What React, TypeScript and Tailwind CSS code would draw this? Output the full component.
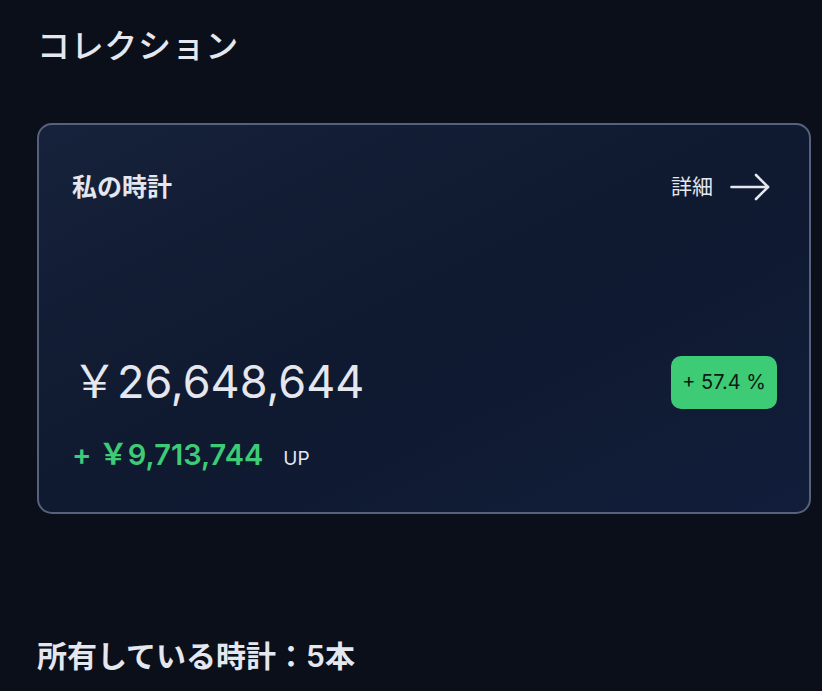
const font = { fontFamily: '"Inter", "Noto Sans CJK JP", sans-serif' };

function LongArrow() {
    return (
        <svg width="40" height="28" viewBox="0 0 40 28" fill="none" stroke="currentColor" strokeWidth="2.6" strokeLinecap="round" strokeLinejoin="round">
            <path d="M1.5 14H38" />
            <path d="M26 2L38 14L26 26" />
        </svg>
    );
}

export default function App() {
    return (
        <div className="min-h-screen bg-[#0b0f19] text-[#e5e7ef]" style={font}>
            <div className="pl-[37px] pr-[11px] pt-[22px]">
                <h1 className="text-[33px] leading-[48px] font-medium tracking-[0.02em]">コレクション</h1>

                {/* Collection card */}
                <div className="mt-[53px] rounded-[15px] border-2 border-[#56627d] bg-gradient-to-br from-[#16223b] via-[#0f192f] to-[#111d3a] pl-[33px] pr-[32px] pt-[44px] pb-[38px]">
                    <div className="flex items-center justify-between">
                        <h2 className="text-[25px] font-bold leading-[36px]">私の時計</h2>
                        <button className="flex items-center gap-[17px] pr-[7px] text-[#e5e7ef]">
                            <span className="text-[21px]">詳細</span>
                            <LongArrow />
                        </button>
                    </div>

                    <div className="mt-[147px] flex items-center justify-between">
                        <div className="text-[45px] leading-[60px]">
                            ￥26,648,644
                        </div>
                        <div className="rounded-[10px] bg-[#3dcb76] px-[11px] py-[12px] text-[20px] leading-[29px] text-[#0d1a14]">
                            + 57.4 %
                        </div>
                    </div>

                    <div className="mt-[25px] flex items-baseline">
                        <span className="text-[29px] font-semibold leading-[36px] text-[#3dcb76]">+ ￥9,713,744</span>
                        <span className="ml-[20px] text-[19px]">UP</span>
                    </div>
                </div>

                <h3 className="mt-[120px] text-[30px] font-semibold leading-[44px]">所有している時計：5本</h3>
            </div>
        </div>
    );
}
